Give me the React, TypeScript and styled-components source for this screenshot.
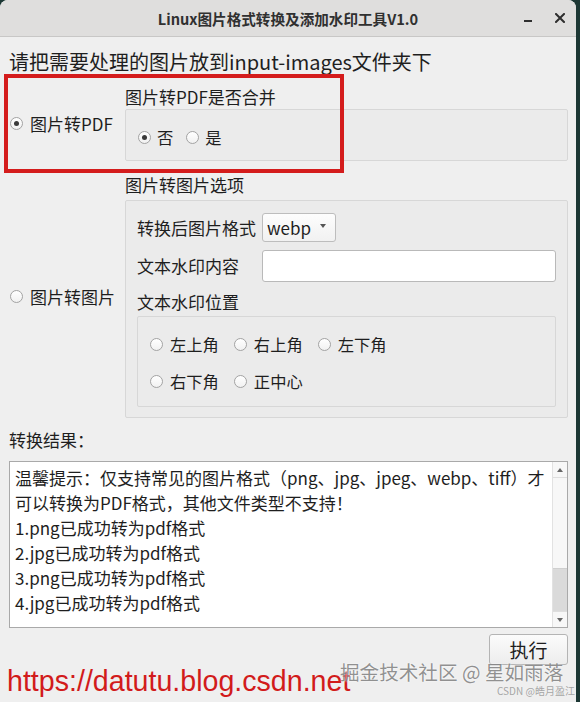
import * as React from "react";
import styled, { createGlobalStyle } from "styled-components";

const GlobalStyle = createGlobalStyle`
  html, body {
    margin: 0;
    padding: 0;
    background: #1c3734;
  }
  body {
    font-family: "Noto Sans CJK SC", "Noto Sans", sans-serif;
    color: #1e1e1e;
  }
`;

const Screen = styled.div`
  position: relative;
  width: 580px;
  height: 702px;
  overflow: hidden;
  display: flex;
`;

const Window = styled.div`
  width: 576px;
  height: 702px;
  background: #efefef;
  border-radius: 8px 8px 0 0;
  display: flex;
  flex-direction: column;
  overflow: hidden;
`;

const TitleBar = styled.div`
  flex: none;
  height: 36px;
  background: #dfdedd;
  border-bottom: 1px solid #c8c7c6;
  display: grid;
  grid-template-columns: 1fr auto 1fr;
  align-items: center;
`;

const Title = styled.div`
  grid-column: 2;
  font-size: 14.6px;
  font-weight: 700;
  color: #303030;
`;

const Controls = styled.div`
  justify-self: end;
  display: flex;
  align-items: center;
  gap: 23px;
  padding-right: 11px;
`;

const Minimize = styled.span`
  display: block;
  width: 8px;
  height: 2px;
  margin-top: 6px;
  background: #2e2e2e;
`;

const Body = styled.div`
  padding: 0 8px 0 9px;
  display: flex;
  flex-direction: column;
`;

const Heading = styled.div`
  margin-top: 12px;
  font-size: 20px;
  line-height: 26px;
`;

const Section = styled.div<{ $top: number }>`
  display: grid;
  grid-template-columns: 116px 1fr;
  margin-top: ${(p) => p.$top}px;
`;

const ModeCell = styled.label`
  display: flex;
  align-items: center;
  gap: 7px;
  padding-left: 1px;
  font-size: 17px;
`;

const Column = styled.div`
  display: flex;
  flex-direction: column;
`;

const Label = styled.div<{ $gap?: number }>`
  font-size: 17px;
  line-height: 22px;
  margin-bottom: ${(p) => p.$gap ?? 0}px;
`;

const GroupBox = styled.div`
  box-sizing: border-box;
  border: 1px solid #d7d7d7;
  border-radius: 2px;
  background: #ebebeb;
`;

const PdfBox = styled(GroupBox)`
  height: 52px;
  display: flex;
  align-items: center;
  gap: 13px;
  padding: 4px 12px 0;
`;

const ImageBox = styled(GroupBox)`
  padding: 12px 11px 10px 11px;
  display: flex;
  flex-direction: column;
`;

const FieldRow = styled.div<{ $top?: number }>`
  display: grid;
  grid-template-columns: 125px 1fr;
  align-items: center;
  margin-top: ${(p) => p.$top ?? 0}px;
`;

const Combo = styled.div`
  box-sizing: border-box;
  width: 74px;
  height: 29px;
  border: 1px solid #bdbdbd;
  border-radius: 3px;
  background: linear-gradient(#fdfdfd, #f1f1f1);
  display: flex;
  align-items: center;
  justify-content: space-between;
  padding: 0 9px 0 4px;
  font-size: 17px;
`;

const Caret = styled.span`
  width: 0;
  height: 0;
  border-left: 3.5px solid transparent;
  border-right: 3.5px solid transparent;
  border-top: 4px solid #555;
  margin-top: -3px;
`;

const TextInput = styled.div`
  box-sizing: border-box;
  height: 32px;
  border: 1px solid #b9b9b9;
  border-radius: 3px;
  background: #fff;
`;

const PositionBox = styled(GroupBox)`
  margin-top: 3px;
  height: 91px;
  padding: 16px 12px 0;
  display: flex;
  flex-direction: column;
  gap: 15px;
`;

const OptionRow = styled.div`
  display: flex;
  align-items: center;
  gap: 15px;
`;

const Option = styled.label<{ $gap?: number }>`
  display: flex;
  align-items: center;
  gap: ${(p) => p.$gap ?? 7}px;
  font-size: 16.3px;
  line-height: 22px;
`;

const Radio = styled.span<{ $checked?: boolean }>`
  position: relative;
  flex: none;
  box-sizing: border-box;
  width: 13px;
  height: 13px;
  border-radius: 50%;
  border: 1px solid #a3a3a3;
  background: linear-gradient(#ffffff, #f1f1f1);
  &::after {
    content: "";
    display: ${(p) => (p.$checked ? "block" : "none")};
    position: absolute;
    inset: 3px;
    border-radius: 50%;
    background: #3a3a3a;
  }
`;

const ResultLabel = styled.div`
  margin-top: 11px;
  font-size: 17px;
  line-height: 22px;
`;

const ResultArea = styled.div`
  box-sizing: border-box;
  margin-top: 10px;
  height: 167px;
  border: 1px solid #a9a9a9;
  background: #fff;
  display: flex;
`;

const ResultText = styled.div`
  flex: 1;
  padding: 3px 5px;
  font-size: 17px;
  line-height: 25px;
  white-space: nowrap;
  overflow: hidden;
`;

const ScrollBar = styled.div`
  flex: none;
  width: 14px;
  border-left: 1px solid #e2e2e2;
  background: #f7f7f7;
  display: flex;
  flex-direction: column;
`;

const ScrollArrow = styled.div<{ $down?: boolean }>`
  height: 15px;
  display: flex;
  align-items: center;
  justify-content: center;
  border-${(p) => (p.$down ? "top" : "bottom")}: 1px solid #dedede;
  &::before {
    content: "";
    border-left: 3.5px solid transparent;
    border-right: 3.5px solid transparent;
    ${(p) => (p.$down ? "border-top" : "border-bottom")}: 4px solid #666;
  }
`;

const ScrollTrack = styled.div`
  flex: 1;
  display: flex;
  flex-direction: column;
  justify-content: flex-end;
`;

const ScrollThumb = styled.div`
  height: 42px;
  background: #dadada;
  border-top: 1px solid #cfcfcf;
`;

const Footer = styled.div`
  display: flex;
  justify-content: flex-end;
  margin-top: 6px;
`;

const RunButton = styled.button`
  box-sizing: border-box;
  width: 79px;
  height: 31px;
  border: 1px solid #b4b4b4;
  border-radius: 3px;
  background: linear-gradient(#fbfbfb, #ededed);
  font-family: inherit;
  font-size: 19px;
  line-height: 29px;
  color: #1e1e1e;
  padding: 0;
`;

const Highlight = styled.div`
  position: absolute;
  left: 4px;
  top: 74px;
  width: 340px;
  height: 99px;
  box-sizing: border-box;
  border: 4px solid #d41c1c;
  pointer-events: none;
`;

const BlogMark = styled.div`
  position: absolute;
  left: 7px;
  top: 664px;
  font-family: "Liberation Sans", Arial, sans-serif;
  font-size: 28.6px;
  line-height: 34px;
  white-space: nowrap;
  color: #d21b1b;
`;

const SiteMark = styled.div`
  position: absolute;
  left: 340px;
  top: 658px;
  font-size: 19.6px;
  line-height: 28px;
  white-space: nowrap;
  color: rgba(110, 110, 110, 0.75);
  text-shadow: 0 0 2px #fff;
`;

const AuthorMark = styled.div`
  position: absolute;
  left: 497px;
  top: 684px;
  font-size: 10px;
  line-height: 14px;
  white-space: nowrap;
  color: rgba(150, 150, 150, 0.85);
`;

const CloseIcon = () => (
  <svg width="10" height="10" viewBox="0 0 10 10">
    <path d="M1 1 L9 9 M9 1 L1 9" stroke="#2e2e2e" strokeWidth="2" strokeLinecap="square" />
  </svg>
);

const results = [
  "1.png已成功转为pdf格式",
  "2.jpg已成功转为pdf格式",
  "3.png已成功转为pdf格式",
  "4.jpg已成功转为pdf格式",
];

export default function App() {
  return (
    <Screen>
      <GlobalStyle />
      <Window>
        <TitleBar>
          <Title>Linux图片格式转换及添加水印工具V1.0</Title>
          <Controls>
            <Minimize />
            <CloseIcon />
          </Controls>
        </TitleBar>
        <Body>
          <Heading>请把需要处理的图片放到input-images文件夹下</Heading>

          <Section $top={11}>
            <ModeCell>
              <Radio $checked />
              图片转PDF
            </ModeCell>
            <Column>
              <Label $gap={1}>图片转PDF是否合并</Label>
              <PdfBox>
                <Option $gap={6}>
                  <Radio $checked />否
                </Option>
                <Option $gap={6}>
                  <Radio />是
                </Option>
              </PdfBox>
            </Column>
          </Section>

          <Section $top={13}>
            <ModeCell>
              <Radio />
              图片转图片
            </ModeCell>
            <Column>
              <Label $gap={4}>图片转图片选项</Label>
              <ImageBox>
                <FieldRow>
                  <Label>转换后图片格式</Label>
                  <Combo>
                    webp
                    <Caret />
                  </Combo>
                </FieldRow>
                <FieldRow $top={8}>
                  <Label>文本水印内容</Label>
                  <TextInput />
                </FieldRow>
                <Label style={{ marginTop: 9 }}>文本水印位置</Label>
                <PositionBox>
                  <OptionRow>
                    <Option>
                      <Radio />左上角
                    </Option>
                    <Option>
                      <Radio />右上角
                    </Option>
                    <Option>
                      <Radio />左下角
                    </Option>
                  </OptionRow>
                  <OptionRow>
                    <Option>
                      <Radio />右下角
                    </Option>
                    <Option>
                      <Radio />正中心
                    </Option>
                  </OptionRow>
                </PositionBox>
              </ImageBox>
            </Column>
          </Section>

          <ResultLabel>转换结果：</ResultLabel>
          <ResultArea>
            <ResultText>
              温馨提示：仅支持常见的图片格式（png、jpg、jpeg、webp、tiff）才
              <br />
              可以转换为PDF格式，其他文件类型不支持！
              {results.map((line) => (
                <div key={line}>{line}</div>
              ))}
            </ResultText>
            <ScrollBar>
              <ScrollArrow />
              <ScrollTrack>
                <ScrollThumb />
              </ScrollTrack>
              <ScrollArrow $down />
            </ScrollBar>
          </ResultArea>
          <Footer>
            <RunButton>执行</RunButton>
          </Footer>
        </Body>
      </Window>
      <Highlight />
      <BlogMark>https://datutu.blog.csdn.net</BlogMark>
      <SiteMark>掘金技术社区 @ 星如雨落</SiteMark>
      <AuthorMark>CSDN @皓月盈江</AuthorMark>
    </Screen>
  );
}
